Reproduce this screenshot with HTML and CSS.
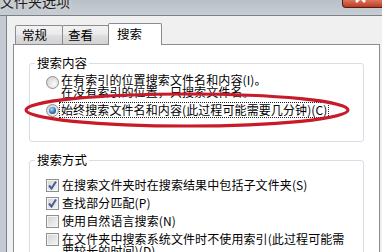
FILE: index.html
```html
<!DOCTYPE html>
<html lang="zh-CN">
<head>
<meta charset="utf-8">
<title>文件夹选项</title>
<link rel="stylesheet" href="styles.css">
</head>
<body>
<div class="window">
  <div class="titlebar">
    <span class="title">文件夹选项</span>
    <span class="close"><svg width="42" height="8" viewBox="0 0 42 8"><path d="M14 -6 L23 3 M23 -6 L14 3" stroke="#fff" stroke-width="2.6" fill="none"/></svg></span>
  </div>
  <div class="frame">
    <div class="frame-left"></div>
    <div class="content">
      <div class="tabs">
        <div class="tab">常规</div>
        <div class="tab second">查看</div>
        <div class="tab active">搜索</div>
      </div>
      <div class="panel">
        <div class="group g1">
          <span class="legend">搜索内容</span>
          <div class="opt">
            <span class="radio"></span>
            <span class="label">在有索引的位置搜索文件名和内容(I)。<br>在没有索引的位置，只搜索文件名。</span>
          </div>
          <div class="opt single">
            <span class="radio on"></span>
            <span class="label focus">始终搜索文件名和内容(此过程可能需要几分钟)(C)</span>
          </div>
        </div>
        <div class="group g2">
          <span class="legend">搜索方式</span>
          <div class="chk">
            <span class="box on"><svg width="11" height="11" viewBox="0 0 11 11"><path d="M2 5.5 L4.5 8.5 L9 1.5" stroke="#4a5d94" stroke-width="2" fill="none"/></svg></span>
            <span class="label">在搜索文件夹时在搜索结果中包括子文件夹(S)</span>
          </div>
          <div class="chk">
            <span class="box on"><svg width="11" height="11" viewBox="0 0 11 11"><path d="M2 5.5 L4.5 8.5 L9 1.5" stroke="#4a5d94" stroke-width="2" fill="none"/></svg></span>
            <span class="label">查找部分匹配(P)</span>
          </div>
          <div class="chk">
            <span class="box"></span>
            <span class="label">使用自然语言搜索(N)</span>
          </div>
          <div class="chk">
            <span class="box"></span>
            <span class="label">在文件夹中搜索系统文件时不使用索引(此过程可能需<br>要较长的时间)(D)</span>
          </div>
        </div>
      </div>
    </div>
  </div>
  <svg class="mark" width="382" height="252" viewBox="0 0 382 252"><ellipse cx="187" cy="110" rx="161" ry="16" fill="none" stroke="#c81a28" stroke-width="3.2"/></svg>
</div>
</body>
</html>
```
FILE: styles.css
```css
* { box-sizing: border-box; }
html, body { margin: 0; padding: 0; }
body {
  width: 382px;
  height: 252px;
  overflow: hidden;
  background: #f0f0f0;
  font-family: "Noto Sans CJK SC", "Noto Sans", sans-serif;
  font-size: 12px;
  color: #000;
}
.window {
  position: relative;
  width: 382px;
  height: 252px;
  overflow: hidden;
  display: flex;
  flex-direction: column;
  background: #f0f0f0;
}
.titlebar {
  height: 16px;
  flex: none;
  display: flex;
  justify-content: space-between;
  align-items: flex-start;
  background: linear-gradient(#b9c0c8, #c8cdd3);
  border-bottom: 1px solid #7a8088;
}
.title {
  font-size: 14px;
  line-height: 14px;
  margin-top: -6px;
  color: #1c1c1c;
  text-shadow: 0 0 5px rgba(255, 255, 255, 0.7);
}
.close {
  display: block;
  width: 42px;
  height: 8px;
  margin-right: -2px;
  background: linear-gradient(#d9775f, #c0391f);
  border: 1px solid #4b2018;
  border-top: none;
  border-radius: 0 0 0 4px;
  overflow: hidden;
}
.close svg { display: block; margin: -1px 0 0 -1px; }
.frame {
  flex: 1;
  display: flex;
}
.frame-left {
  width: 7px;
  flex: none;
  background: #c4cad1;
  border-right: 1px solid #7c828a;
}
.content {
  flex: 1;
  padding-top: 7px;
  display: flex;
  flex-direction: column;
}
.tabs {
  display: flex;
  align-items: flex-start;
  margin-left: 8px;
  height: 22px;
  margin-bottom: -1px;
  position: relative;
  z-index: 1;
}
.tab {
  width: 48px;
  height: 19px;
  margin-top: 2px;
  padding-left: 6px;
  line-height: 18px;
  font-size: 12.5px;
  border: 1px solid #898c95;
  border-bottom: none;
  border-radius: 2px 2px 0 0;
  background: linear-gradient(#f3f3f3, #ebebeb 45%, #dddddd 55%, #d3d3d3);
}
.tab.second {
  width: 47px;
  margin-left: -1px;
  padding-left: 5px;
}
.tab.active {
  width: 54px;
  height: 22px;
  margin-top: 0;
  margin-left: -1px;
  padding-left: 8px;
  padding-top: 1px;
  background: #fff;
}
.panel {
  margin-left: 6px;
  width: 367px;
  height: 230px;
  flex: none;
  background: #fff;
  border: 1px solid #898c95;
  padding: 18px 15px 0 15px;
}
.group {
  position: relative;
  border: 1px solid #d5dfe5;
  border-radius: 3px;
  padding-left: 16px;
}
.legend {
  position: absolute;
  left: 5px;
  top: -8px;
  padding: 0 2px;
  line-height: 14px;
  font-size: 12.5px;
  background: #fff;
}
.g1 {
  height: 79px;
  padding-top: 10px;
}
.g2 {
  margin-top: 18px;
  height: 120px;
  padding-top: 18px;
}
.opt {
  display: flex;
  align-items: flex-start;
}
.opt.single {
  margin-top: 5px;
  align-items: center;
}
.label {
  line-height: 12px;
  white-space: nowrap;
  letter-spacing: 0.1px;
}
.opt .label {
  margin-left: 1px;
  padding: 0 1px;
}
.label.focus {
  padding: 1px 1px;
  outline: 1px dotted #222;
}
.radio {
  position: relative;
  flex: none;
  width: 13px;
  height: 13px;
  margin-top: 2px;
  border-radius: 50%;
  border: 1px solid #8c8f93;
  background: radial-gradient(circle at 65% 65%, #fbfbfb, #d9d9d9 70%, #c8c8c8);
}
.opt.single .radio { margin-top: 0; }
.radio.on::after {
  content: "";
  position: absolute;
  left: 2px;
  top: 2px;
  width: 7px;
  height: 7px;
  border-radius: 50%;
  background: radial-gradient(circle at 40% 35%, #b9e2ff, #3d86c6 45%, #17395f 90%);
}
.chk {
  display: flex;
  align-items: flex-start;
  margin-top: 5px;
}
.g2 .legend + .chk { margin-top: 0; }
.chk .label { margin-left: 3px; }
.box {
  flex: none;
  width: 13px;
  height: 13px;
  border: 1px solid #8e8f8f;
  background: linear-gradient(135deg, #d4d4d4, #f4f4f4);
  box-shadow: inset 0 0 0 1px #f4f4f4;
}
.box svg { display: block; }
.mark {
  position: absolute;
  left: 0;
  top: 0;
  pointer-events: none;
}
```
